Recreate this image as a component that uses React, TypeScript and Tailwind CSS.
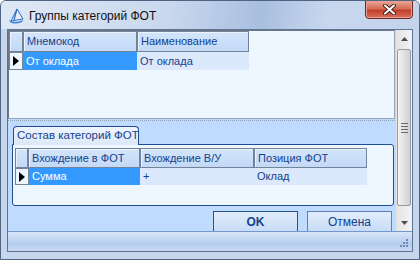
const font = { fontFamily: '"Liberation Sans", Arial, sans-serif' };

function HeaderCell({ w, children }: { w: string; children?: React.ReactNode }) {
  return (
    <div
      className={`${w} h-full shrink-0 border border-[#74839a] bg-[linear-gradient(to_bottom,#d3e5fb,#c2d9f6)] px-[3px] flex items-center whitespace-nowrap text-[11px] text-[#15428b] shadow-[inset_1px_1px_0_#eaf3ff]`}
    >
      {children}
    </div>
  );
}

function Indicator() {
  return (
    <div className="w-[14px] h-full shrink-0 border border-[#74839a] bg-[#eef6ff] flex items-center justify-center">
      <svg width="6" height="10" viewBox="0 0 6 10">
        <path d="M0 0 L6 5 L0 10 Z" fill="#000" />
      </svg>
    </div>
  );
}

function DataCell({
  w,
  selected,
  children,
}: {
  w: string;
  selected?: boolean;
  children?: React.ReactNode;
}) {
  return (
    <div
      className={[
        w,
        "h-full shrink-0 px-[3px] flex items-center whitespace-nowrap text-[11px]",
        selected ? "bg-[#3399ff] text-white" : "bg-[#dce8fb] text-[#15428b]",
      ].join(" ")}
    >
      {children}
    </div>
  );
}

function ScrollBar() {
  return (
    <div className="w-[17px] shrink-0 flex flex-col bg-[linear-gradient(to_right,#e3e3e3,#f3f3f3)] border-l border-[#d6d6d6]">
      <div className="h-[17px] flex items-center justify-center">
        <svg width="7" height="4" viewBox="0 0 7 4">
          <path d="M0 4 L3.5 0 L7 4 Z" fill="#4d4d4d" />
        </svg>
      </div>
      <div className="mx-[1px] mt-[2px] h-[157px] rounded-[2px] border border-[#9a9a9a] bg-[linear-gradient(to_right,#f4f4f4,#e2e2e2,#d0d0d0)] flex items-center justify-center">
        <div className="flex flex-col gap-[2px]">
          <div className="w-[7px] h-px bg-[#6a6a6a]" />
          <div className="w-[7px] h-px bg-[#6a6a6a]" />
          <div className="w-[7px] h-px bg-[#6a6a6a]" />
          <div className="w-[7px] h-px bg-[#6a6a6a]" />
        </div>
      </div>
      <div className="flex-1" />
      <div className="h-[17px] flex items-center justify-center">
        <svg width="7" height="4" viewBox="0 0 7 4">
          <path d="M0 0 L3.5 4 L7 0 Z" fill="#4d4d4d" />
        </svg>
      </div>
    </div>
  );
}

export default function App() {
  return (
    <div
      className="w-[420px] h-[260px] overflow-hidden rounded-t-[6px] border border-[#4f6383] bg-[#c6d6ec] flex flex-col"
      style={font}
    >
      {/* title bar */}
      <div className="h-[28px] shrink-0 flex items-start bg-[linear-gradient(100deg,#dfe8f5_0%,#c9d8ee_40%,#a9bfdf_62%,#c8d7ee_78%,#c3d3eb_100%)]">
        <div className="pl-[7px] pt-[6px]">
          <svg width="17" height="17" viewBox="0 0 17 17">
            <path d="M3 14 L9 2 L15 12 Z" fill="#e8eef8" stroke="#2b6cc4" strokeWidth="1" />
            <path d="M9 2 L6 13" stroke="#2b6cc4" strokeWidth="1.2" />
            <path d="M1 13 Q6 17 15 13 L14 15 Q6 18 2 15 Z" fill="#3b7dd8" />
          </svg>
        </div>
        <div className="pl-[4px] pt-[6px] text-[12px] text-[#111]">Группы категорий ФОТ</div>
        <div className="flex-1" />
        <div className="mr-[6px] w-[48px] h-[19px] -mt-px rounded-b-[4px] border border-[#6e2a22] bg-[linear-gradient(to_bottom,#e9a897,#d46b55_45%,#c2402a_55%,#d7705a)] flex items-center justify-center shadow-[inset_0_0_0_1px_#eaa08e]">
          <svg width="13" height="11" viewBox="0 0 13 11">
            <path d="M2 1.5 L11 9.5 M11 1.5 L2 9.5" stroke="#4a2019" strokeWidth="4" strokeLinecap="round" />
            <path d="M2 1.5 L11 9.5 M11 1.5 L2 9.5" stroke="#fff" strokeWidth="2" strokeLinecap="round" />
          </svg>
        </div>
      </div>

      {/* body */}
      <div className="flex-1 flex px-[6px] pb-[7px]">
        <div className="flex-1 flex flex-col border border-[#5e7496] bg-[#bfdbff]">
          <div className="h-[201px] flex">
            {/* content */}
            <div className="flex-1 flex flex-col min-w-0">
              {/* top grid */}
              <div className="h-[89px] border border-[#9aa5b4] border-t-[#6d7683] border-l-[#6d7683] bg-[#eef7ff] flex flex-col">
                <div className="h-[21px] flex">
                  <HeaderCell w="w-[14px]" />
                  <HeaderCell w="w-[114px]">Мнемокод</HeaderCell>
                  <HeaderCell w="w-[112px]">Наименование</HeaderCell>
                </div>
                <div className="h-[18px] flex">
                  <Indicator />
                  <DataCell w="w-[114px]" selected>
                    От оклада
                  </DataCell>
                  <DataCell w="w-[112px]">От оклада</DataCell>
                </div>
              </div>
              {/* splitter */}
              <div className="h-[4px] pt-[1px]">
                <div className="h-px border-t border-dotted border-[#8fa3bd]" />
              </div>
              {/* lower area */}
              <div className="flex-1 flex flex-col pl-[4px] pr-[1px] pt-[3px]">
                <div className="ml-[1px] w-[126px] h-[19px] -mb-px relative z-10 rounded-t-[4px] border border-b-0 border-[#1f4d8f] bg-[linear-gradient(to_bottom,#eef5fe,#dbe8f8)] px-[3px] flex items-center whitespace-nowrap text-[11.5px] text-[#15428b]">
                  Состав категорий ФОТ
                </div>
                <div className="h-[62px] rounded-[3px] rounded-tl-none border border-[#1f4d8f] bg-[#eef7ff] p-[2px] pt-[3px]">
                  <div className="h-[20px] flex">
                    <HeaderCell w="w-[13px]" />
                    <HeaderCell w="w-[112px]">Вхождение в ФОТ</HeaderCell>
                    <HeaderCell w="w-[114px]">Вхождение В/У</HeaderCell>
                    <HeaderCell w="w-[113px]">Позиция ФОТ</HeaderCell>
                  </div>
                  <div className="h-[17px] flex">
                    <Indicator />
                    <DataCell w="w-[111px]" selected>
                      Сумма
                    </DataCell>
                    <DataCell w="w-[114px]">+</DataCell>
                    <DataCell w="w-[113px]">Оклад</DataCell>
                  </div>
                </div>
                {/* buttons */}
                <div className="flex-1 flex items-end justify-end gap-[9px] pr-[2px]">
                  <button
                    type="button"
                    className="w-[85px] h-[20px] border border-b-0 border-[#27508f] bg-[linear-gradient(to_bottom,#e2edfb,#c8dcf6)] text-[12px] font-bold text-[#15428b] flex items-center justify-center"
                  >
                    OK
                  </button>
                  <button
                    type="button"
                    className="w-[85px] h-[20px] border border-b-0 border-[#5c7fb5] bg-[linear-gradient(to_bottom,#e2edfb,#c8dcf6)] text-[12px] text-[#15428b] flex items-center justify-center"
                  >
                    Отмена
                  </button>
                </div>
              </div>
            </div>
            <ScrollBar />
          </div>
          {/* status bar */}
          <div className="flex-1 border-t border-[#7397cf] bg-[linear-gradient(to_bottom,#d7e5f7,#c2d6f1_40%,#b6cdee_60%,#c9daf2)] flex items-end justify-end pr-[3px] pb-[3px]">
            <svg width="10" height="10" viewBox="0 0 10 10">
              {[
                [7, 1],
                [4, 4],
                [7, 4],
                [1, 7],
                [4, 7],
                [7, 7],
              ].map(([x, y]) => (
                <rect key={`${x}-${y}`} x={x} y={y} width="2" height="2" fill="#6f8db8" />
              ))}
            </svg>
          </div>
        </div>
      </div>
    </div>
  );
}
